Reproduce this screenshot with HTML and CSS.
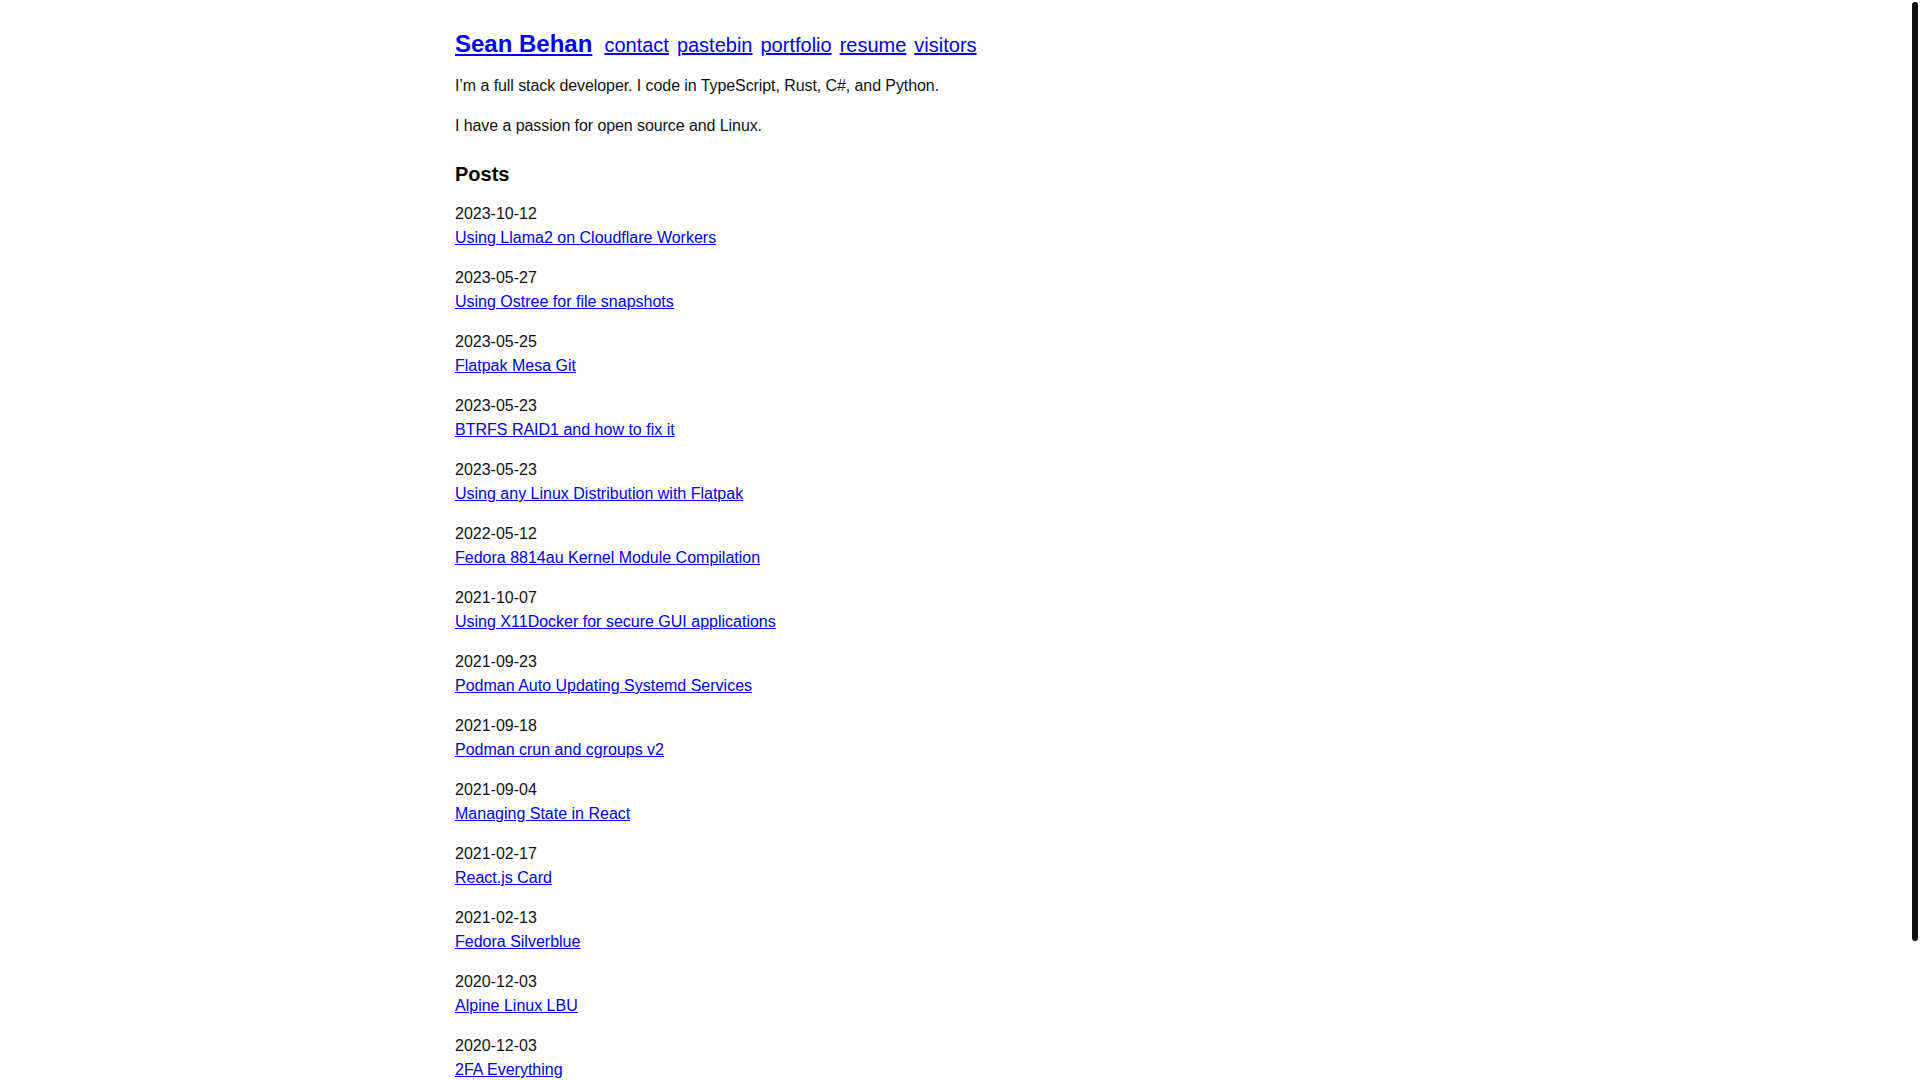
FILE: index.html
```html
<!DOCTYPE html>
<html lang="en">
<head>
<meta charset="utf-8">
<title>Sean Behan</title>
<link rel="stylesheet" href="styles.css">
</head>
<body>
<main class="page">
  <header class="site-header">
    <a class="site-title" href="#">Sean Behan</a>
    <nav class="site-nav">
      <a href="#">contact</a>
      <a href="#">pastebin</a>
      <a href="#">portfolio</a>
      <a href="#">resume</a>
      <a href="#">visitors</a>
    </nav>
  </header>
  <p class="intro">I’m a full stack developer. I code in TypeScript, Rust, C#, and Python.</p>
  <p class="intro">I have a passion for open source and Linux.</p>
  <h2 class="section-title">Posts</h2>
  <ul class="posts">
    <li class="post"><div class="post-date">2023-10-12</div><a href="#">Using Llama2 on Cloudflare Workers</a></li>
    <li class="post"><div class="post-date">2023-05-27</div><a href="#">Using Ostree for file snapshots</a></li>
    <li class="post"><div class="post-date">2023-05-25</div><a href="#">Flatpak Mesa Git</a></li>
    <li class="post"><div class="post-date">2023-05-23</div><a href="#">BTRFS RAID1 and how to fix it</a></li>
    <li class="post"><div class="post-date">2023-05-23</div><a href="#">Using any Linux Distribution with Flatpak</a></li>
    <li class="post"><div class="post-date">2022-05-12</div><a href="#">Fedora 8814au Kernel Module Compilation</a></li>
    <li class="post"><div class="post-date">2021-10-07</div><a href="#">Using X11Docker for secure GUI applications</a></li>
    <li class="post"><div class="post-date">2021-09-23</div><a href="#">Podman Auto Updating Systemd Services</a></li>
    <li class="post"><div class="post-date">2021-09-18</div><a href="#">Podman crun and cgroups v2</a></li>
    <li class="post"><div class="post-date">2021-09-04</div><a href="#">Managing State in React</a></li>
    <li class="post"><div class="post-date">2021-02-17</div><a href="#">React.js Card</a></li>
    <li class="post"><div class="post-date">2021-02-13</div><a href="#">Fedora Silverblue</a></li>
    <li class="post"><div class="post-date">2020-12-03</div><a href="#">Alpine Linux LBU</a></li>
    <li class="post"><div class="post-date">2020-12-03</div><a href="#">2FA Everything</a></li>
  </ul>
</main>
<div class="scroll-thumb" aria-hidden="true"></div>
</body>
</html>
```

FILE: styles.css
```css
html, body {
  margin: 0;
  padding: 0;
  background: #ffffff;
}

body {
  font-family: "Liberation Sans", Arial, sans-serif;
  font-size: 16px;
  line-height: 24px;
  color: #111111;
}

a {
  color: #0000ee;
}

.page {
  max-width: 1010px;
  margin: 0 auto;
  padding: 30px 0 144px 0;
  box-sizing: border-box;
}

.site-header {
  display: flex;
  align-items: baseline;
  gap: 12px;
  line-height: normal;
  margin-bottom: 1px;
}

.site-title {
  font-size: 24px;
  font-weight: bold;
}

.site-nav {
  display: flex;
  align-items: baseline;
  gap: 8px;
  font-size: 20px;
}

.intro {
  margin: 16px 0;
  letter-spacing: -0.08px;
}

.section-title {
  font-size: 20px;
  font-weight: bold;
  line-height: 24px;
  margin: 24px 0 16px 0;
  color: #000000;
}

.posts {
  list-style: none;
  margin: 0;
  padding: 0;
}

.post {
  margin: 0 0 16px 0;
}

.post-date {
  color: #111111;
}

.scroll-thumb {
  position: fixed;
  top: 2px;
  right: 2px;
  width: 6px;
  height: 939px;
  border-radius: 3px;
  background: #111111;
}
```
